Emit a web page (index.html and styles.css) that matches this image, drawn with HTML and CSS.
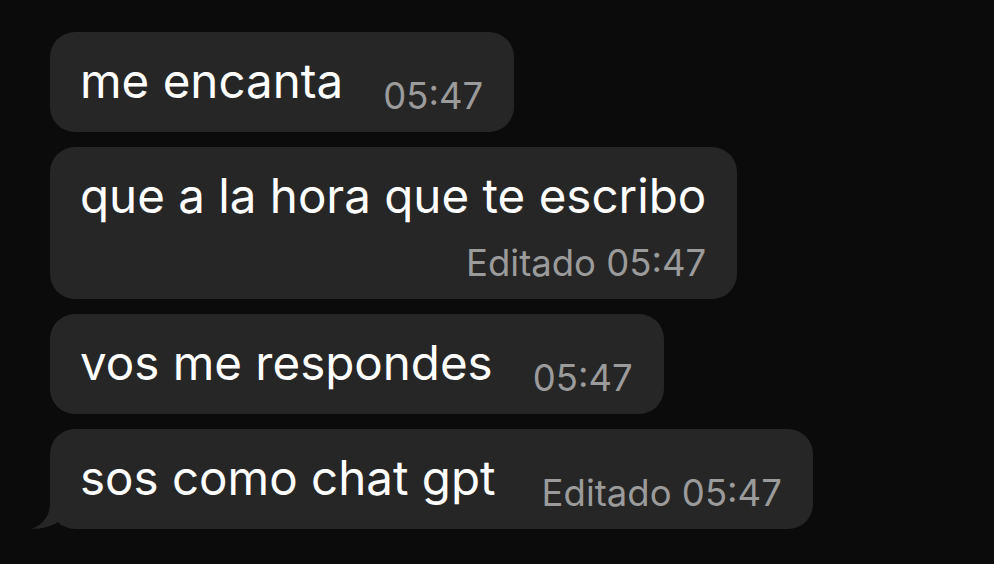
FILE: index.html
```html
<!DOCTYPE html>
<html lang="es">
  <head>
    <meta charset="UTF-8" />
    <meta name="viewport" content="width=device-width, initial-scale=1.0" />
    <title>Chat</title>
    <link rel="stylesheet" href="styles.css">
  </head>
  <body>
    <div class="chat">
      <div class="bubble">
        <span class="text">me encanta</span>
        <span class="meta">05:47</span>
      </div>

      <div class="bubble stacked">
        <span class="text">que a la hora que te escribo</span>
        <span class="meta">Editado 05:47</span>
      </div>

      <div class="bubble">
        <span class="text">vos me respondes</span>
        <span class="meta">05:47</span>
      </div>

      <div class="bubble last">
        <span class="text">sos como chat gpt</span>
        <span class="meta">Editado 05:47</span>
        <svg class="tail" width="40" height="36" viewBox="0 0 40 36">
          <path d="M19 0 L19 10 C19 23 12 32 0 36 C12 36 22 33 30 27 L30 0 Z" fill="#262626" />
        </svg>
      </div>
    </div>
  </body>
</html>
```

FILE: styles.css
```css
html,
body {
  margin: 0;
  background-color: #0b0b0b;
}
body {
  font-family: Inter, "Liberation Sans", sans-serif;
  color: #fff;
  height: 564px;
  overflow: hidden;
}
.chat {
  display: flex;
  flex-direction: column;
  align-items: flex-start;
  gap: 15px;
  padding: 32px 0 0 50px;
}
.bubble {
  position: relative;
  display: flex;
  align-items: flex-end;
  gap: 40px;
  padding: 22px 31px 14px 30px;
  background-color: #262626;
  border-radius: 25px;
}
.text {
  align-self: flex-start;
  font-size: 47.5px;
  line-height: 54px;
  white-space: nowrap;
}
.meta {
  margin-top: 21px;
  font-size: 36.5px;
  line-height: 43px;
  color: #9b9b9b;
  white-space: nowrap;
}
.stacked {
  flex-direction: column;
  align-items: flex-end;
  gap: 19px;
}
.stacked .meta {
  margin-top: 0;
}
.last {
  gap: 46px;
}
.tail {
  position: absolute;
  left: -19px;
  bottom: 0;
}
```
